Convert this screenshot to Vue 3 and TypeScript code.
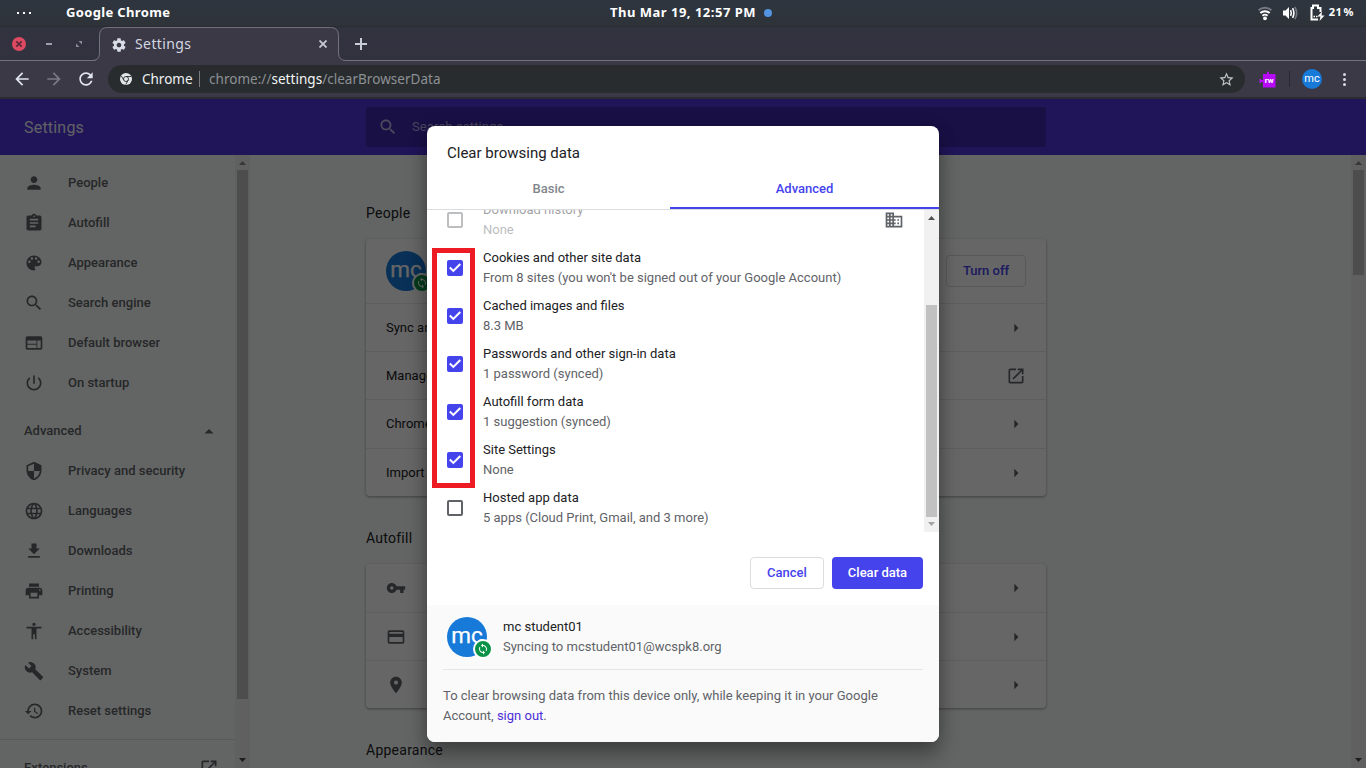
<script setup lang="ts">
interface NavItem {
  label: string
  path: string
}
interface DataType {
  title: string
  detail: string
  checked: boolean
  disabled?: boolean
}
interface CardRow {
  label?: string
  icon?: string
  end: string
  size: string
}

const icons = {
  person: 'M12 12c2.21 0 4-1.79 4-4s-1.79-4-4-4-4 1.79-4 4 1.79 4 4 4zm0 2c-2.67 0-8 1.34-8 4v2h16v-2c0-2.66-5.33-4-8-4z',
  clipboard: 'M19 3h-4.18C14.4 1.84 13.3 1 12 1c-1.3 0-2.4.84-2.82 2H5c-1.1 0-2 .9-2 2v14c0 1.1.9 2 2 2h14c1.1 0 2-.9 2-2V5c0-1.1-.9-2-2-2zm-7 0c.55 0 1 .45 1 1s-.45 1-1 1-1-.45-1-1 .45-1 1-1zm2 14H7v-2h7v2zm3-4H7v-2h10v2zm0-4H7V7h10v2z',
  palette: 'M12 3c-4.97 0-9 4.03-9 9s4.03 9 9 9c.83 0 1.5-.67 1.5-1.5 0-.39-.15-.74-.39-1.01-.23-.26-.38-.61-.38-.99 0-.83.67-1.5 1.5-1.5H16c2.76 0 5-2.24 5-5 0-4.42-4.03-8-9-8zm-5.5 9c-.83 0-1.5-.67-1.5-1.5S5.67 9 6.5 9 8 9.67 8 10.5 7.33 12 6.5 12zm3-4C8.67 8 8 7.33 8 6.5S8.67 5 9.5 5s1.5.67 1.5 1.5S10.33 8 9.5 8zm5 0c-.83 0-1.5-.67-1.5-1.5S13.67 5 14.5 5s1.5.67 1.5 1.5S15.33 8 14.5 8zm3 4c-.83 0-1.5-.67-1.5-1.5S16.67 9 17.5 9s1.5.67 1.5 1.5-.67 1.5-1.5 1.5z',
  search: 'M15.5 14h-.79l-.28-.27C15.41 12.59 16 11.11 16 9.5 16 5.91 13.09 3 9.5 3S3 5.91 3 9.5 5.91 16 9.5 16c1.61 0 3.09-.59 4.23-1.57l.27.28v.79l5 4.99L20.49 19l-4.99-5zm-6 0C7.01 14 5 11.99 5 9.5S7.01 5 9.5 5 14 7.01 14 9.5 11.99 14 9.5 14z',
  web: 'M20 4H4c-1.1 0-1.99.9-1.99 2L2 18c0 1.1.9 2 2 2h16c1.1 0 2-.9 2-2V6c0-1.1-.9-2-2-2zm-5 14H4v-4h11v4zm0-5H4V9h11v4zm5 5h-4V9h4v9z',
  power: 'M13 3h-2v10h2V3zm4.83 2.17l-1.42 1.42C17.99 7.86 19 9.81 19 12c0 3.87-3.13 7-7 7s-7-3.13-7-7c0-2.19 1.01-4.14 2.58-5.42L6.17 5.17C4.23 6.82 3 9.26 3 12c0 4.97 4.03 9 9 9s9-4.03 9-9c0-2.74-1.23-5.18-3.17-6.83z',
  shield: 'M12 1L3 5v6c0 5.55 3.84 10.74 9 12 5.16-1.26 9-6.45 9-12V5l-9-4zm0 10.99h7c-.53 4.12-3.28 7.79-7 8.94V12H5V6.3l7-3.11v8.8z',
  globe: 'M11.99 2C6.47 2 2 6.48 2 12s4.47 10 9.99 10C17.52 22 22 17.52 22 12S17.52 2 11.99 2zm6.93 6h-2.95c-.32-1.25-.78-2.45-1.38-3.56 1.84.63 3.37 1.91 4.33 3.56zM12 4.04c.83 1.2 1.48 2.53 1.91 3.96h-3.82c.43-1.43 1.08-2.76 1.91-3.96zM4.26 14C4.1 13.36 4 12.69 4 12s.1-1.36.26-2h3.38c-.08.66-.14 1.32-.14 2 0 .68.06 1.34.14 2H4.26zm.82 2h2.95c.32 1.25.78 2.45 1.38 3.56-1.84-.63-3.37-1.9-4.33-3.56zm2.95-8H5.08c.96-1.66 2.49-2.93 4.33-3.56C8.81 5.55 8.35 6.75 8.03 8zM12 19.96c-.83-1.2-1.48-2.53-1.91-3.96h3.82c-.43 1.43-1.08 2.76-1.91 3.96zM14.34 14H9.66c-.09-.66-.16-1.32-.16-2 0-.68.07-1.35.16-2h4.68c.09.65.16 1.32.16 2 0 .68-.07 1.34-.16 2zm.25 5.56c.6-1.11 1.06-2.31 1.38-3.56h2.95c-.96 1.65-2.49 2.93-4.33 3.56zM16.36 14c.08-.66.14-1.32.14-2 0-.68-.06-1.34-.14-2h3.38c.16.64.26 1.31.26 2s-.1 1.36-.26 2h-3.38z',
  download: 'M19 9h-4V3H9v6H5l7 7 7-7zM5 18v2h14v-2H5z',
  print: 'M19 8H5c-1.66 0-3 1.34-3 3v6h4v4h12v-4h4v-6c0-1.66-1.34-3-3-3zm-3 11H8v-5h8v5zm3-7c-.55 0-1-.45-1-1s.45-1 1-1 1 .45 1 1-.45 1-1 1zm-1-9H6v4h12V3z',
  accessibility: 'M12 2c1.1 0 2 .9 2 2s-.9 2-2 2-2-.9-2-2 .9-2 2-2zm9 7h-6v13h-2v-6h-2v6H9V9H3V7h18v2z',
  wrench: 'M22.7 19l-9.1-9.1c.9-2.3.4-5-1.5-6.9-2-2-5-2.4-7.4-1.3L9 6 6 9 1.6 4.7C.4 7.1.9 10.1 2.9 12.1c1.9 1.9 4.6 2.4 6.9 1.5l9.1 9.1c.4.4 1 .4 1.4 0l2.3-2.3c.5-.4.5-1.1.1-1.4z',
  restore: 'M13 3c-4.97 0-9 4.03-9 9H1l3.89 3.89.07.14L9 12H6c0-3.87 3.13-7 7-7s7 3.13 7 7-3.13 7-7 7c-1.93 0-3.68-.79-4.94-2.06l-1.42 1.42C8.27 19.99 10.51 21 13 21c4.97 0 9-4.03 9-9s-4.03-9-9-9zm-1 5v5l4.28 2.54.72-1.21-3.5-2.08V8H12z',
  external: 'M19 19H5V5h7V3H5c-1.11 0-2 .9-2 2v14c0 1.1.89 2 2 2h14c1.1 0 2-.9 2-2v-7h-2v7zM14 3v2h3.59l-9.83 9.83 1.41 1.41L19 6.41V10h2V3h-7z',
  arrow: 'M10 7l5 5-5 5z',
  key: 'M12.65 10C11.83 7.67 9.61 6 7 6c-3.31 0-6 2.69-6 6s2.69 6 6 6c2.61 0 4.83-1.67 5.65-4H17v4h4v-4h2v-4H12.65zM7 14c-1.1 0-2-.9-2-2s.9-2 2-2 2 .9 2 2-.9 2-2 2z',
  card: 'M20 4H4c-1.11 0-1.99.89-1.99 2L2 18c0 1.11.89 2 2 2h16c1.11 0 2-.89 2-2V6c0-1.11-.89-2-2-2zm0 14H4v-6h16v6zm0-10H4V6h16v2z',
  place: 'M12 2C8.13 2 5 5.13 5 9c0 5.25 7 13 7 13s7-7.75 7-13c0-3.87-3.13-7-7-7zm0 9.5c-1.38 0-2.5-1.12-2.5-2.5s1.12-2.5 2.5-2.5 2.5 1.12 2.5 2.5-1.12 2.5-2.5 2.5z',
  domain: 'M12 7V3H2v18h20V7H12zM6 19H4v-2h2v2zm0-4H4v-2h2v2zm0-4H4V9h2v2zm0-4H4V5h2v2zm4 12H8v-2h2v2zm0-4H8v-2h2v2zm0-4H8V9h2v2zm0-4H8V5h2v2zm10 12h-8v-2h2v-2h-2v-2h2v-2h-2V9h8v10zm-2-8h-2v2h2v-2zm0 4h-2v2h2v-2z',
  gear: 'M19.43 12.98c.04-.32.07-.64.07-.98s-.03-.66-.07-.98l2.11-1.65c.19-.15.24-.42.12-.64l-2-3.46c-.12-.22-.39-.3-.61-.22l-2.49 1c-.52-.4-1.08-.73-1.69-.98l-.38-2.65C14.46 2.18 14.25 2 14 2h-4c-.25 0-.46.18-.49.42l-.38 2.65c-.61.25-1.17.59-1.69.98l-2.49-1c-.23-.09-.49 0-.61.22l-2 3.46c-.13.22-.07.49.12.64l2.11 1.65c-.04.32-.07.65-.07.98s.03.66.07.98l-2.11 1.65c-.19.15-.24.42-.12.64l2 3.46c.12.22.39.3.61.22l2.49-1c.52.4 1.08.73 1.69.98l.38 2.65c.03.24.24.42.49.42h4c.25 0 .46-.18.49-.42l.38-2.65c.61-.25 1.17-.59 1.69-.98l2.49 1c.23.09.49 0 .61-.22l2-3.46c.12-.22.07-.49-.12-.64l-2.11-1.65zM12 15.5c-1.93 0-3.5-1.57-3.5-3.5s1.57-3.5 3.5-3.5 3.5 1.57 3.5 3.5-1.57 3.5-3.5 3.5z',
  back: 'M20 11H7.83l5.59-5.59L12 4l-8 8 8 8 1.41-1.41L7.83 13H20v-2z',
  forward: 'M12 4l-1.41 1.41L16.17 11H4v2h12.17l-5.58 5.59L12 20l8-8z',
  refresh: 'M17.65 6.35C16.2 4.9 14.21 4 12 4c-4.42 0-7.99 3.58-7.99 8s3.57 8 7.99 8c3.73 0 6.84-2.55 7.73-6h-2.08c-.82 2.33-3.04 4-5.65 4-3.31 0-6-2.69-6-6s2.69-6 6-6c1.66 0 3.14.69 4.22 1.78L13 11h7V4l-2.35 2.35z',
  star: 'M22 9.24l-7.19-.62L12 2 9.19 8.63 2 9.24l5.46 4.73L5.82 21 12 17.27 18.18 21l-1.63-7.03L22 9.24zM12 15.4l-3.76 2.27 1-4.28-3.32-2.88 4.38-.38L12 6.1l1.71 4.04 4.38.38-3.32 2.88 1 4.28L12 15.4z',
  sync: 'M12 4V1L8 5l4 4V6c3.31 0 6 2.69 6 6 0 1.01-.25 1.97-.7 2.8l1.46 1.46C19.54 15.03 20 13.57 20 12c0-4.42-3.58-8-8-8zm0 14c-3.31 0-6-2.69-6-6 0-1.01.25-1.97.7-2.8L5.24 7.74C4.46 8.97 4 10.43 4 12c0 4.42 3.58 8 8 8v3l4-4-4-4v3z',
}

const primaryNav: NavItem[] = [
  { label: 'People', path: icons.person },
  { label: 'Autofill', path: icons.clipboard },
  { label: 'Appearance', path: icons.palette },
  { label: 'Search engine', path: icons.search },
  { label: 'Default browser', path: icons.web },
  { label: 'On startup', path: icons.power },
]

const advancedNav: NavItem[] = [
  { label: 'Privacy and security', path: icons.shield },
  { label: 'Languages', path: icons.globe },
  { label: 'Downloads', path: icons.download },
  { label: 'Printing', path: icons.print },
  { label: 'Accessibility', path: icons.accessibility },
  { label: 'System', path: icons.wrench },
  { label: 'Reset settings', path: icons.restore },
]

const peopleRows: CardRow[] = [
  { label: 'Sync and', end: icons.arrow, size: 'short' },
  { label: 'Manage', end: icons.external, size: 'short' },
  { label: 'Chrome', end: icons.arrow, size: 'tall' },
  { label: 'Import', end: icons.arrow, size: 'short' },
]

const autofillRows: CardRow[] = [
  { icon: icons.key, end: icons.arrow, size: 'first' },
  { icon: icons.card, end: icons.arrow, size: 'short' },
  { icon: icons.place, end: icons.arrow, size: 'short' },
]

const dataTypes: DataType[] = [
  { title: 'Download history', detail: 'None', checked: false, disabled: true },
  { title: 'Cookies and other site data', detail: "From 8 sites (you won't be signed out of your Google Account)", checked: true },
  { title: 'Cached images and files', detail: '8.3 MB', checked: true },
  { title: 'Passwords and other sign-in data', detail: '1 password (synced)', checked: true },
  { title: 'Autofill form data', detail: '1 suggestion (synced)', checked: true },
  { title: 'Site Settings', detail: 'None', checked: true },
  { title: 'Hosted app data', detail: '5 apps (Cloud Print, Gmail, and 3 more)', checked: false },
]
</script>

<template>
  <div class="screen">
    <div class="topbar">
      <div class="top-left">
        <span class="dots"><i></i><i></i><i></i></span>
        <span class="app-name">Google Chrome</span>
      </div>
      <div class="clock"><span>Thu Mar 19, 12:57 PM</span><i class="notice"></i></div>
      <div class="tray">
        <svg class="wifi" width="16" height="16" viewBox="0 0 16 16" fill="none">
          <path d="M1.6 5.2a9.4 9.4 0 0 1 12.8 0" stroke="#747982" stroke-width="2" />
          <path d="M3.3 8a6.9 6.9 0 0 1 9.4 0" stroke="#fff" stroke-width="2" />
          <path d="M5.4 10.7a4 4 0 0 1 5.2 0" stroke="#fff" stroke-width="1.8" />
          <circle cx="8" cy="13.3" r="1.9" fill="#fff" />
        </svg>
        <svg class="volume" width="17" height="16" viewBox="0 0 17 16" fill="none">
          <path d="M1 5.5h2.5L7 2v12l-3.500-3.500H1z" fill="#fff" />
          <path d="M8.600 5.200q1.400 2.800 0 5.600M10.600 3.200q2.600 4.800 0 9.600" stroke="#fff" stroke-width="1.600" />
          <path d="M12.900 1.800q3.600 6.200 0 12.400" stroke="#747982" stroke-width="1.600" />
        </svg>
        <svg class="battery" width="15" height="17" viewBox="0 0 15 17" fill="none">
          <path d="M8 15.500H1.500V4H3V1.500h5V4h2.500v4" stroke="#fff" stroke-width="2" />
          <path d="M3.500 12.500h1.500M6 12.500h1.500" stroke="#fff" stroke-width="1.500" />
          <path d="M12 7.500l-4.500 5h3L9.500 17l5-5.500h-3z" fill="#fff" />
        </svg>
        <span class="percent">21<em>%</em></span>
      </div>
    </div>

    <div class="tabstrip">
      <div class="window-buttons">
        <svg width="14" height="14" viewBox="0 0 14 14"><circle cx="7" cy="7" r="7" fill="#dd4a62" /><path d="M4.300 4.300l5.400 5.400M9.700 4.300l-5.400 5.400" stroke="#5b2a3b" stroke-width="1.700" /></svg>
        <svg width="6" height="2" viewBox="0 0 6 2"><path d="M0 1h6" stroke="#9c9fac" stroke-width="2" /></svg>
        <svg width="6" height="6" viewBox="0 0 6 6"><path d="M2.500 0H6v3.500zM0 2.500V6h3.500z" fill="#8b8e9b" /></svg>
      </div>
      <div class="tab">
        <svg class="tab-shape" width="254" height="35" viewBox="0 0 254 35">
          <path d="M0 34 Q6.500 33.500 6.500 27 V8.500 Q6.500 .5 14.500 .5 H237.500 Q245.500 .5 245.500 8.500 V26 Q245.500 33.500 253 33.500 H254 V35 H0z" fill="#3c3947" />
          <path d="M0 33.500 Q6.500 33 6.500 26 V8.500 Q6.500 .5 14.500 .5 H237.500 Q245.500 .5 245.500 8.500 V26 Q245.500 33.500 253 33.500 H254" fill="none" stroke="#73717c" />
        </svg>
        <svg class="tab-icon" width="16" height="16" viewBox="0 0 24 24"><path :d="icons.gear" /></svg>
        <span class="tab-title">Settings</span>
        <svg class="tab-close" width="8" height="8" viewBox="0 0 8 8"><path d="M.5 .5l7 7M7.500 .5l-7 7" /></svg>
      </div>
      <svg class="new-tab" width="12" height="12" viewBox="0 0 12 12"><path d="M6 0v12M0 6h12" /></svg>
    </div>

    <div class="toolbar">
      <svg class="nav-icon" viewBox="0 0 24 24"><path :d="icons.back" /></svg>
      <svg class="nav-icon faded" viewBox="0 0 24 24"><path :d="icons.forward" /></svg>
      <svg class="nav-icon" viewBox="0 0 24 24"><path :d="icons.refresh" /></svg>
      <div class="omnibox">
        <svg class="chrome-logo" width="12" height="12" viewBox="0 0 12 12">
          <circle cx="6" cy="6" r="6" fill="#e3e7ea" />
          <circle cx="6" cy="6" r="2.500" fill="none" stroke="#292c2e" stroke-width=".9" />
          <path d="M6 3.500h5.200M3.800 7.200L1.300 2.900M8.200 7.200L5.700 11.600" stroke="#292c2e" stroke-width=".9" />
        </svg>
        <span class="origin">Chrome</span>
        <i class="divider"></i>
        <span class="url">chrome://<b>settings</b>/clearBrowserData</span>
        <svg class="star" width="17" height="17" viewBox="0 0 24 24"><path :d="icons.star" /></svg>
      </div>
      <svg class="extension" width="17" height="17" viewBox="0 0 17 17">
        <path d="M4 3h4V.800h2V3h6.500v13.500H4V11H2v1H.500V8H2v1h2z" fill="#b70af8" />
        <text x="10.200" y="11.800" text-anchor="middle" fill="#fff">rw</text>
      </svg>
      <i class="toolbar-sep"></i>
      <span class="profile">mc</span>
      <span class="menu-dots"><i></i><i></i><i></i></span>
    </div>

    <div class="page">
      <header class="settings-head">
        <span class="settings-title">Settings</span>
        <div class="search-box">
          <svg width="20" height="20" viewBox="0 0 24 24"><path :d="icons.search" /></svg>
          <span>Search settings</span>
        </div>
      </header>
      <div class="body">
        <nav class="sidebar">
          <div v-for="item in primaryNav" :key="item.label" class="nav-row">
            <svg width="20" height="20" viewBox="0 0 24 24"><path :d="item.path" /></svg>
            <span>{{ item.label }}</span>
          </div>
          <div class="advanced"><span>Advanced</span><svg width="10" height="5" viewBox="0 0 10 5"><path d="M.500 4.500L5 0l4.500 4.500z" /></svg></div>
          <div v-for="item in advancedNav" :key="item.label" class="nav-row">
            <svg width="20" height="20" viewBox="0 0 24 24"><path :d="item.path" /></svg>
            <span>{{ item.label }}</span>
          </div>
          <div class="extensions"><span>Extensions</span><svg width="20" height="20" viewBox="0 0 24 24"><path :d="icons.external" /></svg></div>
        </nav>
        <div class="scrollbar side">
          <svg width="7" height="4" viewBox="0 0 7 4"><path d="M0 4l3.500-4L7 4z" fill="#8a8a8a" /></svg>
          <i class="thumb"></i>
          <svg class="down" width="7" height="4" viewBox="0 0 7 4"><path d="M0 0l3.500 4L7 0z" fill="#4a4a4a" /></svg>
        </div>
        <main class="content">
          <div class="column">
            <h2 class="h-people">People</h2>
            <section class="card">
              <div class="account">
                <span class="avatar">mc<i class="badge"><svg viewBox="0 0 24 24"><path :d="icons.sync" /></svg></i></span>
                <span class="turn-off">Turn off</span>
              </div>
              <div v-for="row in peopleRows" :key="row.label" class="card-row" :class="row.size">
                <span>{{ row.label }}</span>
                <svg width="20" height="20" viewBox="0 0 24 24"><path :d="row.end" /></svg>
              </div>
            </section>
            <h2 class="h-autofill">Autofill</h2>
            <section class="card">
              <div v-for="(row, i) in autofillRows" :key="i" class="card-row" :class="row.size">
                <svg width="20" height="20" viewBox="0 0 24 24"><path :d="row.icon" /></svg>
                <svg width="20" height="20" viewBox="0 0 24 24"><path :d="row.end" /></svg>
              </div>
            </section>
            <h2 class="h-appearance">Appearance</h2>
          </div>
        </main>
        <div class="scrollbar main">
          <svg width="7" height="4" viewBox="0 0 7 4"><path d="M0 4l3.500-4L7 4z" fill="#8a8a8a" /></svg>
          <i class="thumb"></i>
          <svg class="down" width="7" height="4" viewBox="0 0 7 4"><path d="M0 0l3.500 4L7 0z" fill="#4a4a4a" /></svg>
        </div>
      </div>

      <div class="scrim">
        <div class="dialog">
          <div class="dialog-title">Clear browsing data</div>
          <div class="tabs"><span class="basic">Basic</span><span class="selected">Advanced</span></div>
          <div class="list-area">
            <div class="list">
              <div v-for="item in dataTypes" :key="item.title" class="item" :class="{ disabled: item.disabled }">
                <span class="box" :class="{ checked: item.checked }">
                  <svg v-if="item.checked" width="16" height="16" viewBox="0 0 16 16"><path d="M2.800 7.600l3.500 3.300 7-6.900" /></svg>
                </span>
                <div class="item-text"><div class="title">{{ item.title }}</div><div class="detail">{{ item.detail }}</div></div>
                <svg v-if="item.disabled" class="domain" width="20" height="20" viewBox="0 0 24 24"><path :d="icons.domain" /></svg>
              </div>
            </div>
            <div class="scrollbar inner">
              <svg width="7" height="4" viewBox="0 0 7 4"><path d="M0 4l3.500-4L7 4z" fill="#505050" /></svg>
              <i class="thumb"></i>
              <svg class="down" width="7" height="4" viewBox="0 0 7 4"><path d="M0 0l3.500 4L7 0z" fill="#a3a3a3" /></svg>
            </div>
          </div>
          <div class="actions"><button class="cancel">Cancel</button><button class="clear">Clear data</button></div>
          <div class="footer">
            <div class="who">
              <span class="avatar">mc<i class="badge"><svg viewBox="0 0 24 24"><path :d="icons.sync" /></svg></i></span>
              <div class="item-text"><div class="title">mc student01</div><div class="detail">Syncing to mcstudent01@wcspk8.org</div></div>
            </div>
            <p>To clear browsing data from this device only, while keeping it in your Google Account, <a>sign out</a>.</p>
          </div>
          <div class="highlight"></div>
        </div>
      </div>
    </div>
  </div>
</template>

<style>
html, body { margin: 0; overflow: hidden; }
</style>

<style scoped>
* { box-sizing: border-box; }
svg { display: block; flex: none; }
.screen { width: 1366px; height: 768px; overflow: hidden; display: flex; flex-direction: column; font-family: Roboto, "Liberation Sans", sans-serif; font-size: 13px; }

/* desktop bar */
.topbar { height: 27px; flex: none; display: grid; grid-template-columns: 1fr auto 1fr; align-items: center; background: linear-gradient(#2f353f, #2e3339); border-bottom: 1px solid #292d31; color: #fff; font: bold 13px "Noto Sans", sans-serif; letter-spacing: .4px; padding-bottom: 1px; }
.top-left { display: flex; align-items: center; padding-left: 17px; }
.dots { display: flex; gap: 4px; width: 49px; }
.dots i { width: 2px; height: 2px; background: #fff; }
.app-name { letter-spacing: .35px; padding-bottom: 2px; }
.clock { display: flex; align-items: center; gap: 8px; padding-left: 16px; letter-spacing: .5px; }
.clock span { padding-bottom: 2px; }
.notice { width: 8px; height: 8px; border-radius: 50%; background: #5294e2; }
.tray { display: flex; align-items: center; justify-content: flex-end; padding-right: 12px; }
.volume { margin-left: 9px; }
.battery { margin-left: 11px; }
.percent { font-size: 11px; margin-left: 4px; padding-bottom: 2px; letter-spacing: .6px; }
.percent em { font-style: normal; margin-left: 1px; }

/* tab strip */
.tabstrip { height: 34px; flex: none; display: flex; align-items: center; background: linear-gradient(#31333f, #32323f); border-bottom: 1px solid #73717c; }
.window-buttons { width: 93px; display: flex; align-items: center; padding-left: 12px; }
.window-buttons svg:nth-child(2) { margin-left: 20px; }
.window-buttons svg:nth-child(3) { margin-left: 24px; }
.tab { position: relative; width: 254px; height: 34px; display: flex; align-items: center; padding: 1px 20px 0 18px; margin-bottom: -1px; }
.tab-shape { position: absolute; left: 0; top: 0; }
.tab-icon { position: relative; fill: #d9dde6; }
.tab-title { position: relative; flex: 1; margin: 0 0 2px 8px; font: 14px "Noto Sans", sans-serif; letter-spacing: .4px; color: #d3d7e2; }
.tab-close { position: relative; fill: none; stroke: #c9cdd8; stroke-width: 1.700; margin-bottom: 1px; }
.new-tab { margin-left: 8px; stroke: #c9cdd8; stroke-width: 2; }

/* toolbar */
.toolbar { height: 38px; flex: none; display: flex; align-items: center; background: #3c3947; border-bottom: 2px solid #2b2a35; padding: 0 18px 0 13px; }
.nav-icon { width: 20px; height: 20px; margin: 0 13px 0 -1px; fill: #e1e5f0; }
.nav-icon.faded { fill: #797986; }
.omnibox { width: 1137px; height: 28px; border-radius: 14px; background: #292c2e; display: flex; align-items: center; padding: 0 10px 0 12px; margin-left: -1px; color: #8b9095; font: 13.500px "Noto Sans", sans-serif; }
.origin { color: #eef1f4; margin-left: 10px; width: 49px; }
.divider { width: 1px; height: 16px; background: #7a7d80; margin: 0 9px 0 8px; }
.url { flex: 1; letter-spacing: .03px; }
.url b { font-weight: 400; color: #f4f6f8; }
.star { fill: #c3c7cb; }
.extension { margin-left: 14px; }
.extension text { font: bold 8px Roboto, sans-serif; }
.toolbar-sep { width: 1px; height: 16px; background: #292833; margin-left: 13px; }
.profile { width: 20px; height: 20px; border-radius: 50%; background: #1779d8; color: #fff; margin-left: 12px; font-size: 11px; line-height: 19px; text-align: center; }
.menu-dots { display: flex; flex-direction: column; gap: 2px; margin-left: 21px; }
.menu-dots i { width: 3px; height: 3px; border-radius: 50%; background: #d6d9e2; }

/* settings page */
.page { position: relative; flex: 1; min-height: 0; display: flex; flex-direction: column; }
.settings-head { height: 56px; flex: none; display: flex; align-items: center; background: #5035dc; color: #fff; }
.settings-title { width: 366px; padding-left: 24px; font-size: 16px; letter-spacing: .2px; opacity: .93; }
.search-box { width: 680px; height: 40px; background: #402ab0; border-radius: 2px; display: flex; align-items: center; padding-left: 12px; gap: 14px; color: #b7aee6; font-size: 13px; letter-spacing: .12px; }
.search-box svg { fill: #c0b8e6; }
.search-box span { padding-bottom: 1px; }
.body { flex: 1; min-height: 0; display: flex; background: #f8fcf9; color: #202124; }
.sidebar { width: 235px; height: 613px; overflow: hidden; padding-top: 8px; font-weight: 500; color: #5f6368; }
.sidebar svg { fill: #5f6368; }
.nav-row { height: 40px; display: flex; align-items: center; padding-left: 24px; gap: 24px; }
.sidebar span { padding-bottom: 2px; }
.advanced { height: 40px; margin-top: 8px; display: flex; align-items: center; justify-content: space-between; padding: 0 21px 0 24px; }
.extensions { height: 56px; margin-top: 8px; border-top: 1px solid #dfe1e3; display: flex; align-items: center; justify-content: space-between; padding: 0 16px 0 24px; }
.extensions span { padding-bottom: 0; }
.scrollbar { width: 15px; flex: none; background: #f1f1f1; display: flex; flex-direction: column; align-items: center; padding-top: 6px; position: relative; }
.scrollbar .down { margin-top: auto; margin-bottom: 6px; }
.thumb { width: 11px; background: #c1c1c1; margin-top: 5px; flex: none; }
.side .thumb { height: 529px; }
.main .thumb { height: 105px; }
.content { flex: 1; min-width: 0; padding-left: 116px; overflow: hidden; }
.column { width: 680px; }
h2 { margin: 0; font-size: 14px; font-weight: 400; line-height: 20px; letter-spacing: .25px; }
.h-people { padding: 48px 0 16px; }
.h-autofill { padding: 32px 0 16px; }
.h-appearance { padding-top: 32px; }
.card { background: #fff; border-radius: 4px; box-shadow: 0 1px 2px rgba(60, 64, 67, .3), 0 1px 3px 1px rgba(60, 64, 67, .15); }
.account { height: 64px; display: flex; align-items: center; justify-content: space-between; padding: 0 20px; }
.turn-off { width: 80px; height: 32px; border: 1px solid #dadce0; border-radius: 4px; color: #4543ec; font-weight: 500; line-height: 30px; text-align: center; }
.card-row { height: 48px; border-top: 1px solid #e8eaed; display: flex; align-items: center; justify-content: space-between; padding: 0 20px; }
.card-row.tall { height: 49px; }
.card-row.tall span { padding-bottom: 1px; }
.card-row.first { border-top: 0; }
.card-row svg { fill: #5f6368; }
.avatar { position: relative; width: 40px; height: 40px; flex: none; border-radius: 50%; background: #1779d8; color: #fff; font-size: 22.500px; -webkit-text-stroke: .25px #fff; line-height: 37px; text-align: center; }
.badge { position: absolute; left: 26px; top: 22px; width: 20px; height: 20px; border: 2px solid #fff; border-radius: 50%; background: #0a9246; display: flex; align-items: center; justify-content: center; }
.badge svg { width: 12px; height: 12px; fill: #fff; }

/* modal */
.scrim { position: absolute; inset: 0; background: rgba(0, 0, 0, .6); display: flex; justify-content: center; align-items: flex-start; padding-top: 27px; }
.dialog { position: relative; width: 512px; height: 616px; background: #fff; border-radius: 8px; overflow: visible; display: flex; flex-direction: column; box-shadow: 0 0 16px rgba(0, 0, 0, .18), 0 14px 20px rgba(0, 0, 0, .3); color: #202124; }
.dialog-title { height: 41px; padding: 17px 20px 0; font-size: 15px; line-height: 20px; }
.tabs { height: 43px; flex: none; border-bottom: 1px solid #dadce0; display: flex; font-weight: 500; line-height: 44px; text-align: center; color: #80868b; }
.basic { width: 243px; }
.selected { width: 269px; color: #4543ec; border-bottom: 2px solid #4543ec; }
.list-area { height: 322px; flex: none; display: flex; overflow: hidden; }
.list { flex: 1; margin-top: -14px; padding-left: 20px; }
.item { height: 48px; display: flex; align-items: center; }
.box { width: 16px; height: 16px; border: 2px solid #5f6368; border-radius: 2px; }
.box.checked { border: 0; background: #4543ec; }
.box path { fill: none; stroke: #fff; stroke-width: 2; }
.item-text { flex: 1; margin-left: 20px; line-height: 20px; }
.detail { color: #5f6368; }
.disabled .item-text, .disabled .box { opacity: .42; }
.domain { fill: #5f6368; margin-right: 20px; }
.inner .thumb { height: 212px; margin-top: 85px; }
.actions { height: 73px; flex: none; display: flex; justify-content: flex-end; gap: 8px; padding: 25px 16px 0; }
button { height: 32px; border-radius: 4px; font: 500 13px Roboto, sans-serif; padding: 0 0 2px; }
.cancel { width: 74px; border: 1px solid #dadce0; background: #fff; color: #4543ec; }
.clear { width: 91px; border: 0; background: #4543ec; color: #fff; }
.footer { flex: 1; background: #fafafa; border-radius: 0 0 8px 8px; padding: 0 16px; }
.who { height: 65px; border-bottom: 1px solid #e4e6e8; display: flex; align-items: center; padding-left: 4px; }
.who .item-text { margin-left: 16px; }
p { margin: 16px 20px 0 0; line-height: 20px; color: #5f6368; }
p a { color: #4c2fd8; }
.highlight { position: absolute; left: 5px; top: 122px; width: 43px; height: 240px; border: 5px solid #ed1c24; }
</style>
